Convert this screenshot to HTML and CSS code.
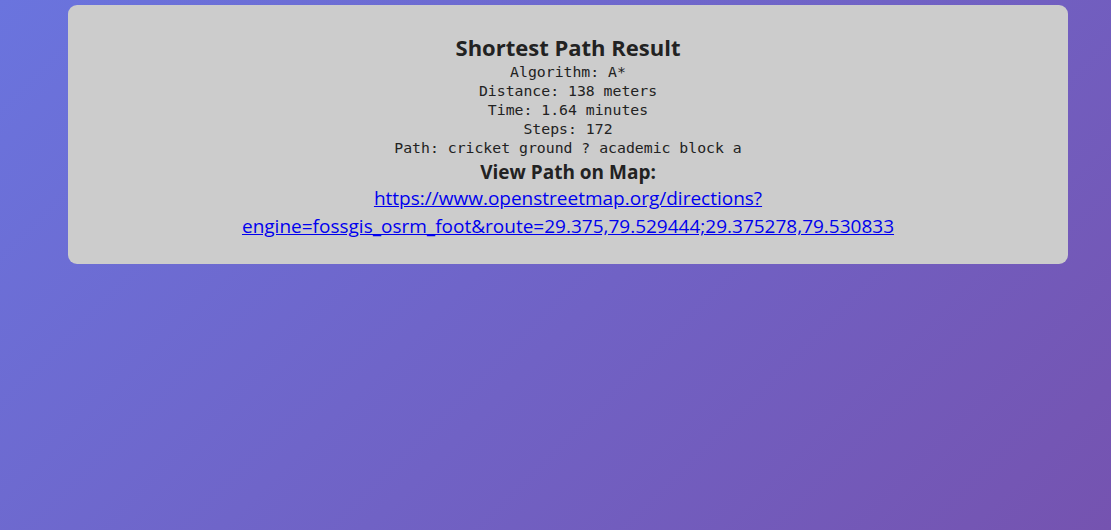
FILE: index.html
```html
<!DOCTYPE html>
<html>
<head>
<meta charset="utf-8">
<link rel="stylesheet" href="styles.css">
</head>
<body>
<div class="page">
  <div class="card">
    <h2 class="title">Shortest Path Result</h2>
    <div class="info">
      <div>Algorithm: A*</div>
      <div>Distance: 138 meters</div>
      <div>Time: 1.64 minutes</div>
      <div>Steps: 172</div>
      <div>Path: cricket ground ? academic block a</div>
    </div>
    <h3 class="subtitle">View Path on Map:</h3>
    <a class="link" href="#">https://www.openstreetmap.org/directions?engine=fossgis_osrm_foot&amp;route=29.375,79.529444;29.375278,79.530833</a>
  </div>
</div>
</body>
</html>
```
FILE: styles.css
```css
html, body {
  margin: 0;
  height: 100%;
}
body {
  background: linear-gradient(135deg, #6a74de 0%, #7553b0 100%);
  font-family: "Open Sans", "Noto Sans", sans-serif;
  color: #222;
}
.page {
  padding: 5px 43px 0 68px;
}
.card {
  background: #cccccc;
  border-radius: 9px;
  padding: 27px 24px 24px;
  text-align: center;
  height: 259px;
  box-sizing: border-box;
}
.title {
  margin: 0;
  font-size: 22px;
  line-height: 30px;
  font-weight: 700;
}
.info {
  font-family: "DejaVu Sans Mono", "Liberation Mono", monospace;
  font-size: 14.8px;
  line-height: 19px;
}
.subtitle {
  margin: 4px 0 0;
  font-size: 19px;
  line-height: 23px;
  font-weight: 700;
}
.link {
  display: block;
  width: 660px;
  margin: 0 auto;
  font-size: 19px;
  line-height: 28px;
  color: #0000ee;
  word-break: break-word;
}
```
